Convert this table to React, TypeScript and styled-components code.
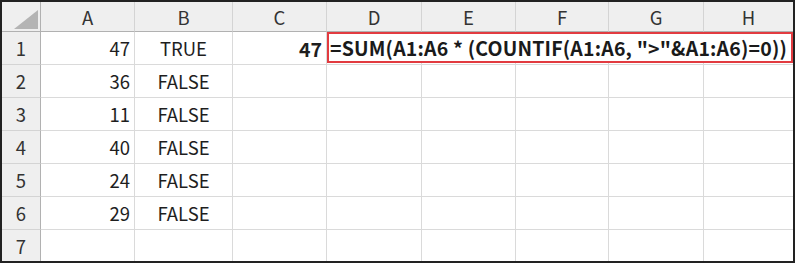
import React from "react";
import styled, { createGlobalStyle } from "styled-components";

const Global = createGlobalStyle`
  html, body { margin: 0; padding: 0; background: #ffffff; }
  body { font-family: "Noto Sans CJK JP", "Noto Sans", sans-serif; }
`;

const COLS = [39, 94, 98, 94, 95, 94, 93, 95, 89];
const HEADERS = ["A", "B", "C", "D", "E", "F", "G", "H"];

const Frame = styled.div`
  position: relative;
  width: 795px;
  height: 263px;
  box-sizing: border-box;
  border: 2px solid #222222;
  overflow: hidden;
  background: #ffffff;
`;

const Grid = styled.div`
  display: grid;
  grid-template-columns: ${COLS.map((c) => `${c}px`).join(" ")};
  grid-template-rows: 30px repeat(7, 33px);
`;

const Cell = styled.div<{ $align?: "left" | "right" | "center"; $bold?: boolean; $last?: boolean }>`
  box-sizing: border-box;
  border-right: ${(p) => (p.$last ? "none" : "1px solid #dadada")};
  border-bottom: 1px solid #dadada;
  display: flex;
  align-items: center;
  justify-content: ${(p) =>
    p.$align === "right" ? "flex-end" : p.$align === "center" ? "center" : "flex-start"};
  padding: 0 4px 0 4px;
  font-size: ${(p) => (p.$bold ? "19.5px" : "18.5px")};
  font-weight: ${(p) => (p.$bold ? 700 : 400)};
  color: #1e1e1e;
  white-space: nowrap;
`;

const ColHead = styled.div<{ $last?: boolean }>`
  box-sizing: border-box;
  background: #efefef;
  border-right: ${(p) => (p.$last ? "none" : "1px solid #d4d4d4")};
  border-bottom: 1px solid #b1b1b1;
  display: flex;
  align-items: center;
  justify-content: center;
  font-size: 18.5px;
  color: #333333;
  padding-top: 1px;
`;

const RowHead = styled.div`
  box-sizing: border-box;
  background: #efefef;
  border-right: 1px solid #b1b1b1;
  border-bottom: 1px solid #d4d4d4;
  display: flex;
  align-items: center;
  justify-content: center;
  font-size: 18.5px;
  color: #333333;
`;

const Corner = styled.div`
  position: relative;
  box-sizing: border-box;
  background: #efefef;
  border-right: 1px solid #b1b1b1;
  border-bottom: 1px solid #b1b1b1;
`;

const CornerMark = styled.svg`
  position: absolute;
  left: 12px;
  top: 8px;
`;

const FormulaBox = styled.div`
  position: absolute;
  left: 325px;
  top: 30px;
  width: 466px;
  height: 31px;
  box-sizing: border-box;
  border: 2px solid #e23b40;
  background: #ffffff;
  display: flex;
  align-items: center;
  padding-left: 1px;
  font-size: 19.5px;
  font-weight: 700;
  letter-spacing: 0.18px;
  color: #1a1a1a;
  white-space: nowrap;
  overflow: hidden;
`;

const rows: { a: number; b: string }[] = [
  { a: 47, b: "TRUE" },
  { a: 36, b: "FALSE" },
  { a: 11, b: "FALSE" },
  { a: 40, b: "FALSE" },
  { a: 24, b: "FALSE" },
  { a: 29, b: "FALSE" },
];

export default function App() {
  return (
    <>
      <Global />
      <Frame>
        <Grid>
          <Corner>
            <CornerMark width="24" height="19" viewBox="0 0 24 19">
              <polygon points="24,0 24,19 0,19" fill="#b4b4b4" />
            </CornerMark>
          </Corner>
          {HEADERS.map((h, i) => (
            <ColHead key={h} $last={i === HEADERS.length - 1}>
              {h}
            </ColHead>
          ))}
          {Array.from({ length: 7 }, (_, r) => {
            const row = rows[r];
            return (
              <React.Fragment key={r}>
                <RowHead>{r + 1}</RowHead>
                <Cell $align="right">{row ? row.a : ""}</Cell>
                <Cell $align="center">{row ? row.b : ""}</Cell>
                <Cell $align="right" $bold>
                  {r === 0 ? "47" : ""}
                </Cell>
                <Cell />
                <Cell />
                <Cell />
                <Cell />
                <Cell $last />
              </React.Fragment>
            );
          })}
        </Grid>
        <FormulaBox>=SUM(A1:A6 * (COUNTIF(A1:A6, "&gt;"&amp;A1:A6)=0))</FormulaBox>
      </Frame>
    </>
  );
}
